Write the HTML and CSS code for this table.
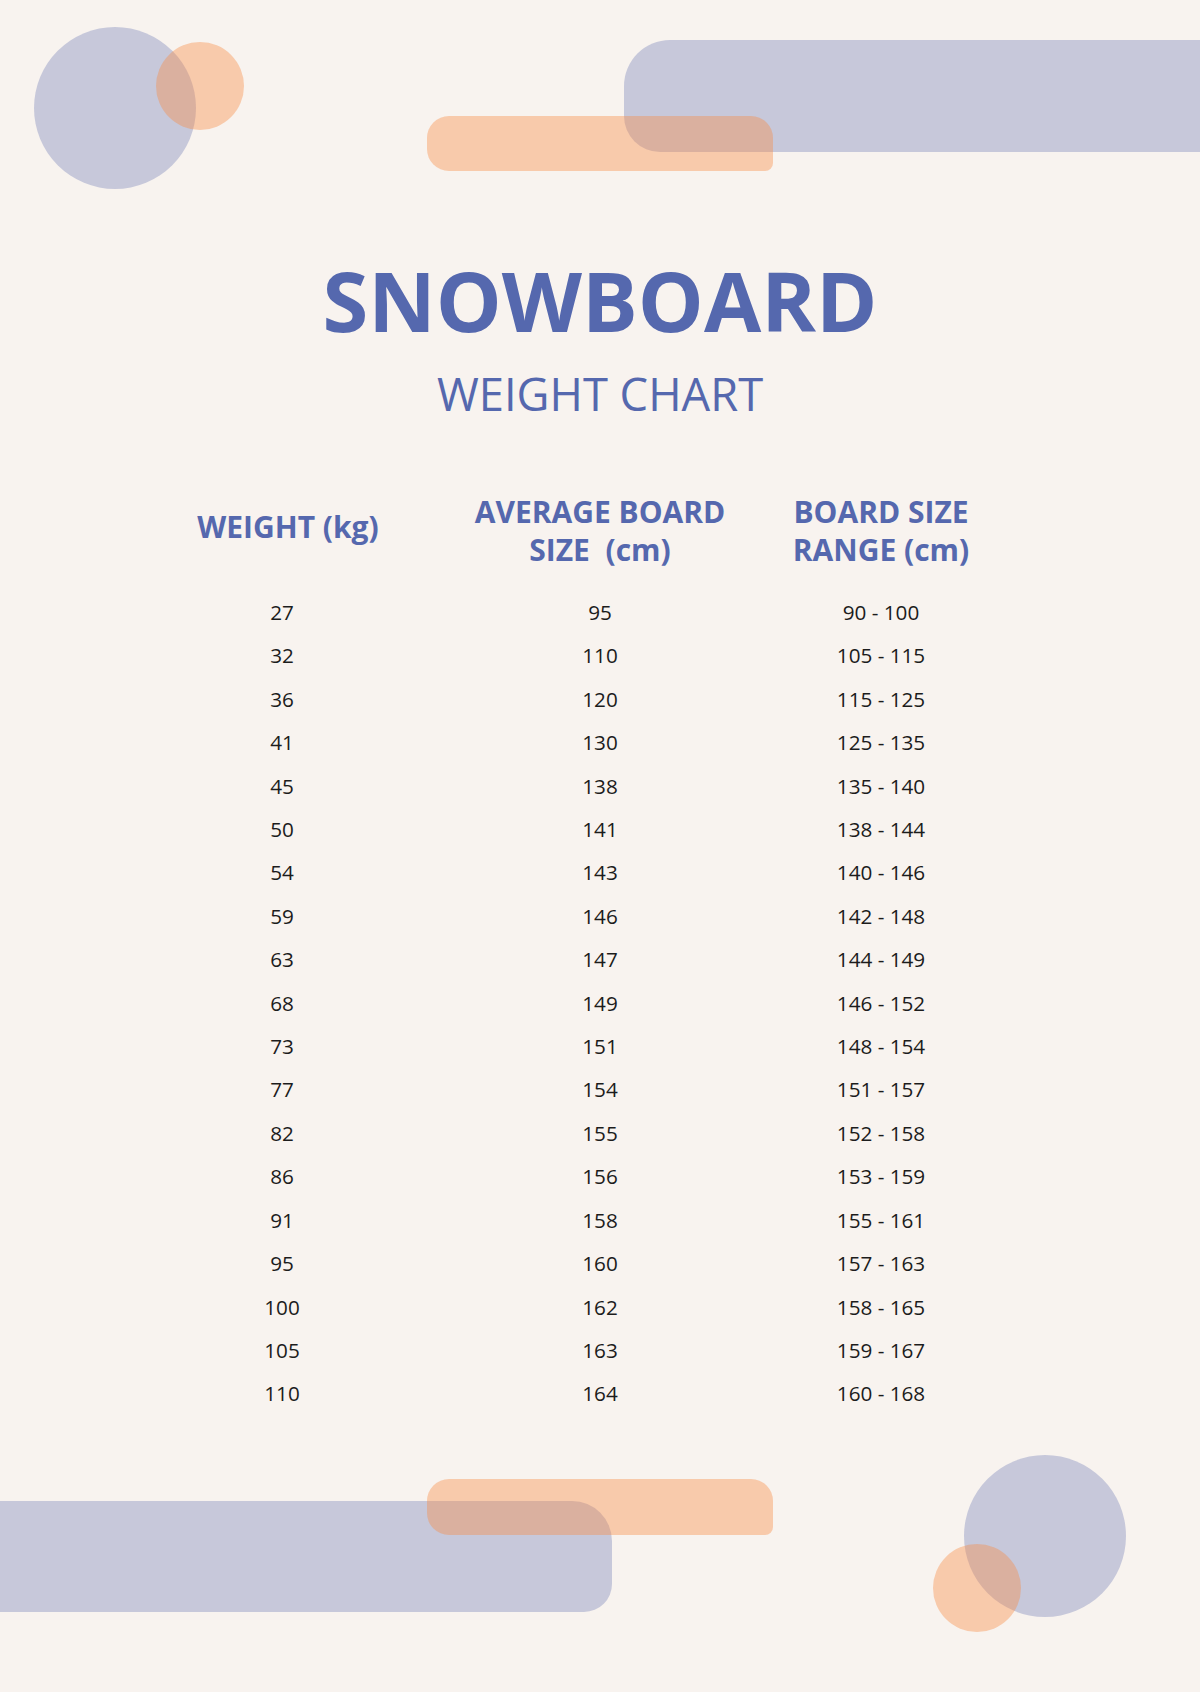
FILE: index.html
```html
<!DOCTYPE html>
<html lang="en">
<head>
<meta charset="utf-8">
<title>Snowboard Weight Chart</title>
<link rel="stylesheet" href="styles.css">
</head>
<body>
<div class="page">
  <div class="deco lav circle-tl"></div>
  <div class="deco lav bar-tr"></div>
  <div class="deco org circle-tl-small"></div>
  <div class="deco org bar-top"></div>

  <div class="deco lav bar-bl"></div>
  <div class="deco lav circle-br"></div>
  <div class="deco org bar-bottom"></div>
  <div class="deco org circle-br-small"></div>

  <main class="content">
    <h1 class="title">SNOWBOARD</h1>
    <h2 class="subtitle">WEIGHT CHART</h2>

    <div class="chart">
      <div class="head head-1">WEIGHT (kg)</div>
      <div class="head">AVERAGE BOARD<br>SIZE&nbsp; (cm)</div>
      <div class="head head-3">BOARD SIZE<br>RANGE (cm)</div>

      <div class="cell">27</div><div class="cell">95</div><div class="cell">90 - 100</div>
      <div class="cell">32</div><div class="cell">110</div><div class="cell">105 - 115</div>
      <div class="cell">36</div><div class="cell">120</div><div class="cell">115 - 125</div>
      <div class="cell">41</div><div class="cell">130</div><div class="cell">125 - 135</div>
      <div class="cell">45</div><div class="cell">138</div><div class="cell">135 - 140</div>
      <div class="cell">50</div><div class="cell">141</div><div class="cell">138 - 144</div>
      <div class="cell">54</div><div class="cell">143</div><div class="cell">140 - 146</div>
      <div class="cell">59</div><div class="cell">146</div><div class="cell">142 - 148</div>
      <div class="cell">63</div><div class="cell">147</div><div class="cell">144 - 149</div>
      <div class="cell">68</div><div class="cell">149</div><div class="cell">146 - 152</div>
      <div class="cell">73</div><div class="cell">151</div><div class="cell">148 - 154</div>
      <div class="cell">77</div><div class="cell">154</div><div class="cell">151 - 157</div>
      <div class="cell">82</div><div class="cell">155</div><div class="cell">152 - 158</div>
      <div class="cell">86</div><div class="cell">156</div><div class="cell">153 - 159</div>
      <div class="cell">91</div><div class="cell">158</div><div class="cell">155 - 161</div>
      <div class="cell">95</div><div class="cell">160</div><div class="cell">157 - 163</div>
      <div class="cell">100</div><div class="cell">162</div><div class="cell">158 - 165</div>
      <div class="cell">105</div><div class="cell">163</div><div class="cell">159 - 167</div>
      <div class="cell">110</div><div class="cell">164</div><div class="cell">160 - 168</div>
    </div>
  </main>
</div>
</body>
</html>
```

FILE: styles.css
```css
html, body {
  margin: 0;
  padding: 0;
}

body {
  background: #f8f3ef;
  font-family: "Open Sans", "Noto Sans", sans-serif;
}

.page {
  position: relative;
  width: 1200px;
  height: 1692px;
  overflow: hidden;
  background: #f8f3ef;
}

/* decorative shapes */
.deco {
  position: absolute;
}

.lav {
  background: #c7c8da;
}

.org {
  background: rgba(248, 140, 70, 0.4);
}

.circle-tl {
  left: 34px;
  top: 27px;
  width: 162px;
  height: 162px;
  border-radius: 50%;
}

.circle-tl-small {
  left: 156px;
  top: 42px;
  width: 88px;
  height: 88px;
  border-radius: 50%;
}

.bar-tr {
  left: 624px;
  top: 40px;
  width: 600px;
  height: 112px;
  border-radius: 46px 0 0 36px;
}

.bar-top {
  left: 427px;
  top: 116px;
  width: 346px;
  height: 55px;
  border-radius: 22px 22px 8px 22px;
}

.bar-bl {
  left: -20px;
  top: 1501px;
  width: 632px;
  height: 111px;
  border-radius: 0 40px 28px 0;
}

.bar-bottom {
  left: 427px;
  top: 1479px;
  width: 346px;
  height: 56px;
  border-radius: 22px 22px 8px 22px;
}

.circle-br {
  left: 964px;
  top: 1455px;
  width: 162px;
  height: 162px;
  border-radius: 50%;
}

.circle-br-small {
  left: 933px;
  top: 1544px;
  width: 88px;
  height: 88px;
  border-radius: 50%;
}

/* content */
.content {
  position: relative;
  padding-top: 258px;
  color: #5568ae;
}

.title {
  margin: 0;
  text-align: center;
  font-size: 83px;
  line-height: 83px;
  font-weight: 700;
}

.subtitle {
  margin: 30px 0 0;
  text-align: center;
  font-size: 45.3px;
  line-height: 46px;
  font-weight: 400;
}

.chart {
  display: grid;
  grid-template-columns: 260px 376px 186px;
  margin: 76px 0 0 152px;
  justify-items: center;
}

.head {
  font-size: 30px;
  line-height: 38px;
  font-weight: 700;
  text-align: center;
  white-space: nowrap;
  margin-bottom: 22px;
}

.head-1 {
  align-self: center;
  padding: 0 0 8px 12px;
}

.cell {
  font-size: 20.7px;
  line-height: 43.4px;
  color: #1c1c1c;
  white-space: nowrap;
}
```
